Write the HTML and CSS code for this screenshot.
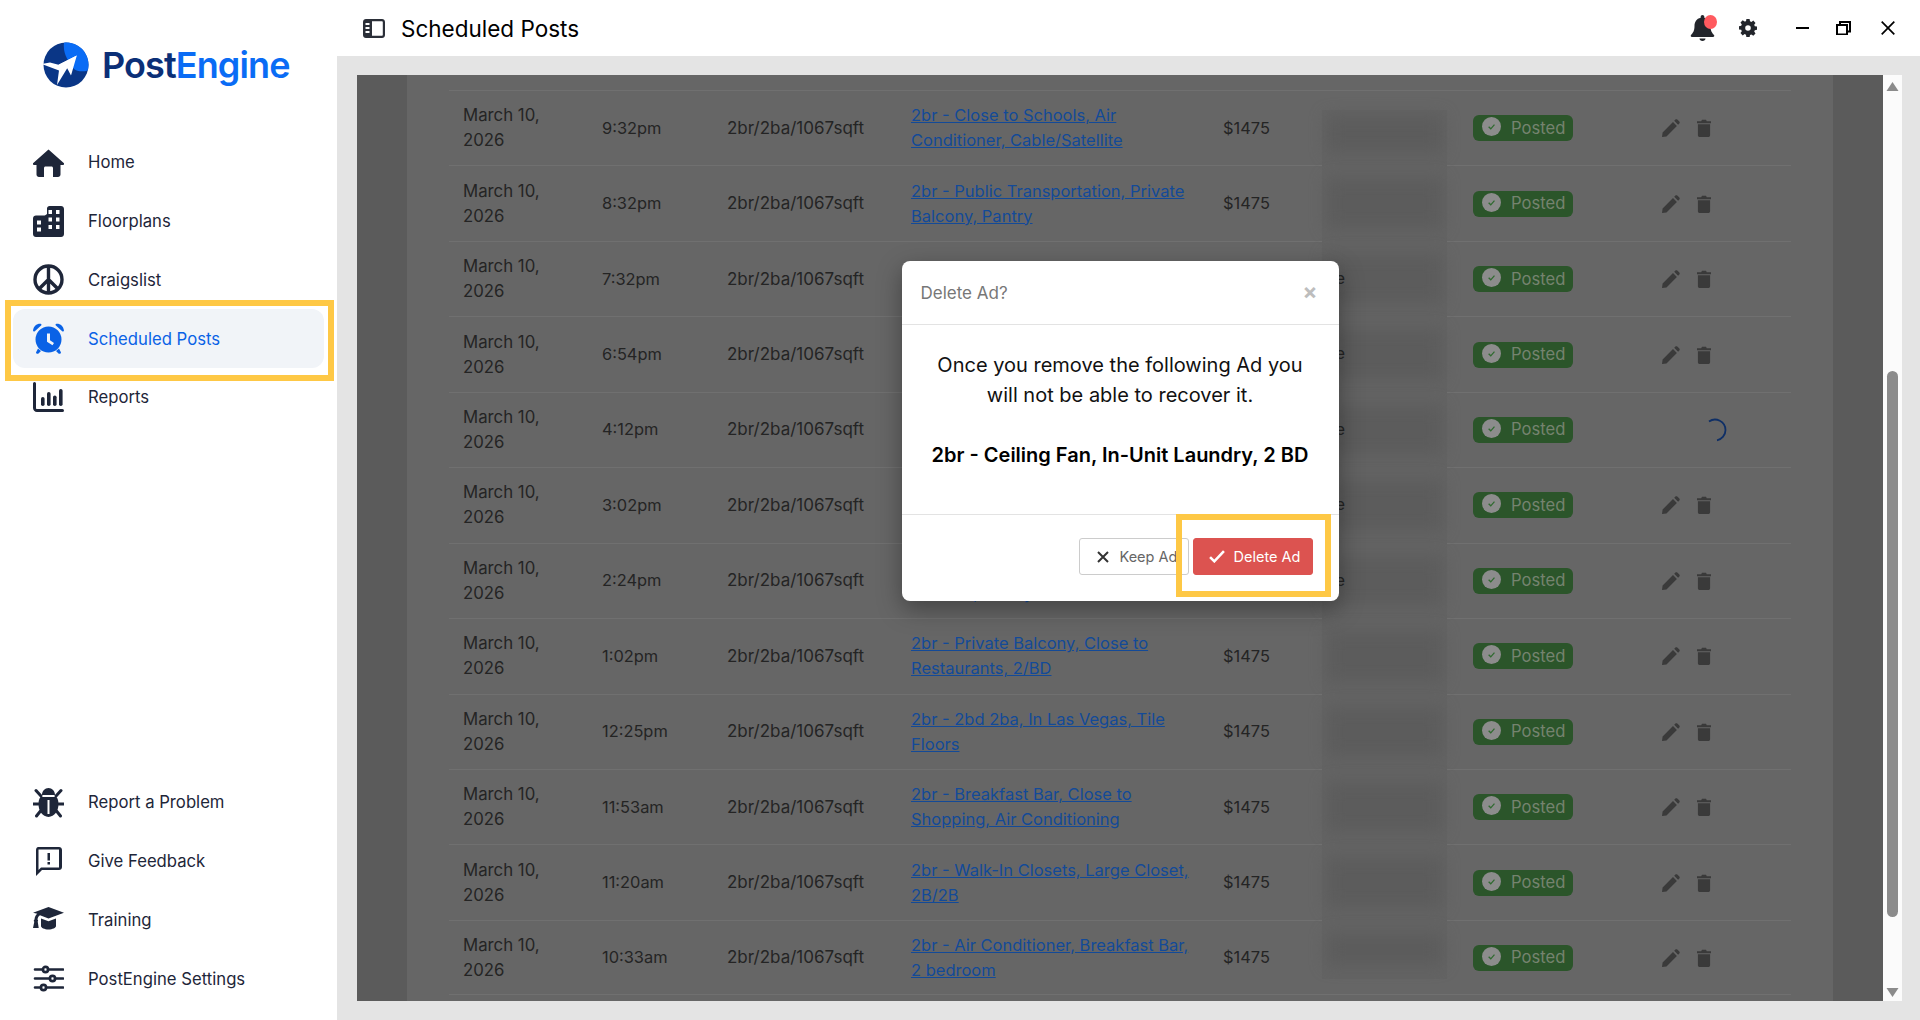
FILE: index.html
```html
<!DOCTYPE html>
<html lang="en">
<head>
<meta charset="utf-8">
<title>Scheduled Posts - PostEngine</title>
<link rel="stylesheet" href="styles.css">
</head>
<body>
<svg class="sprites" aria-hidden="true">
  <symbol id="pencil" viewBox="0 0 18 18"><path d="M0 18l.6-4.6L11 3l3.9 4L4.5 17.400zM12.200 1.800l1.200-1.200c.6-.6 1.300-.6 1.900 0l2 2c.6.6.6 1.300 0 1.900l-1.200 1.200z"/></symbol>
  <symbol id="trash" viewBox="0 0 14 18"><path d="M0 2.300h4.200L5 .8h4l.8 1.500H14v1.900H0zM.9 5.200h12.200v11c0 1-.8 1.800-1.800 1.800H2.700c-1 0-1.800-.8-1.800-1.800z"/></symbol>
  <symbol id="tick" viewBox="0 0 18 18"><circle cx="9" cy="9" r="9" fill="#8c8c8c"/><path d="M6.300 9.200l2 2 3.500-4" fill="none" stroke="#2f6a2f" stroke-width="1.200"/></symbol>
</svg>
<div class="app">
  <aside class="sidebar">
    <div class="sidebar-top">
      <div class="logo">
        <svg class="logo-mark" viewBox="0 0 46 46">
          <circle cx="23" cy="23" r="22.500" fill="#0a3686"/>
          <path d="M21 .8C32 -1 45.500 8 45.500 23c0 3-.6 4.600-1 5.500-4 1.500-11 1-13.500-1.500C26 21 19.500 12 21 .8z" fill="#0a6cf5"/>
          <path d="M33.800 13.500L28 33.500l-3.800-7.300L14 43l2-14.500L-1 22l8-1.500 8.500 2.300z" fill="#fff"/>
          <path d="M15.500 22.800L33.800 13.500 24.200 26.200z" fill="#fff"/>
        </svg>
        <span class="logo-text"><span class="logo-post">Post</span><span class="logo-engine">Engine</span></span>
      </div>
      <nav class="nav">
        <a class="nav-item">
          <svg class="nav-icon" viewBox="0 0 31 31"><path d="M15.500 2.500L31 16.300c.5.8 0 1.700-.9 1.700h-2.600v9.500c0 1.400-1.100 2.500-2.500 2.500h-5V21c0-.8-.7-1.500-1.500-1.500h-6c-.8 0-1.500.7-1.500 1.500v9H6c-1.400 0-2.500-1.100-2.500-2.500V18H.9c-.9 0-1.400-.9-.9-1.700z"/></svg>
          Home
        </a>
        <a class="nav-item">
          <svg class="nav-icon" viewBox="0 0 31 31"><path fill-rule="evenodd" d="M14 2.500C14 1.100 15.100 0 16.500 0H28c1.700 0 3 1.300 3 3v25c0 1.700-1.300 3-3 3H3c-1.700 0-3-1.300-3-3V12.500c0-1.700 1.300-3 3-3h8c.8 0 1.500-.2 3-1.500zM15.500 4v4h3.500V4zM23 4v4h3.500V4zM15.500 11.500v4h3.500v-4zM23 11.500v4h3.500v-4zM15.500 19v4h3.500v-4zM23 19v4h3.500v-4zM4 14.500v4h4v-4zM4 21.500v4h4v-4z"/></svg>
          Floorplans
        </a>
        <a class="nav-item">
          <svg class="nav-icon peace" viewBox="0 0 31 31"><circle cx="15.500" cy="15.500" r="13.500"/><path d="M15.500 2v27M15.500 15.500L6 25M15.500 15.500L25 25"/></svg>
          Craigslist
        </a>
        <a class="nav-item active">
          <svg class="nav-icon" viewBox="0 0 31 31"><path fill-rule="evenodd" d="M15.500 3.500a13 13 0 1 1 0 26 13 13 0 0 1 0-26zM14 10.500v8.300l5.500 3.500 1.500-2.300-4-2.700v-6.800z"/><path d="M0 7.500C.8 3 3.500.6 7.500.8c1 .1 1.300 1 .6 1.700L1.800 8.200C1 8.800.1 8.500 0 7.500zM31 7.500C30.200 3 27.500.6 23.500.8c-1 .1-1.300 1-.6 1.700l6.300 5.700c.8.600 1.700.3 1.800-.7zM5 25.500l3 2.500-2.500 2.400c-.6.6-1.400.6-2 0s-.6-1.400 0-2zM26 25.500l-3 2.500 2.500 2.400c.6.6 1.400.6 2 0s.6-1.400 0-2z"/></svg>
          Scheduled Posts
          <span class="highlight highlight-nav"></span>
        </a>
        <a class="nav-item">
          <svg class="nav-icon" viewBox="0 0 31 31"><path d="M0 1.500a1.500 1.500 0 0 1 3 0V26c0 .6.400 1 1 1h25.500a1.500 1.500 0 0 1 0 3H4c-2.200 0-4-1.800-4-4z"/><rect x="8" y="15" width="3.600" height="9" rx="1.800"/><rect x="14" y="10" width="3.600" height="14" rx="1.800"/><rect x="20" y="13.500" width="3.600" height="10.500" rx="1.800"/><rect x="26" y="7" width="3.600" height="17" rx="1.800"/></svg>
          Reports
        </a>
      </nav>
    </div>
    <nav class="nav">
      <a class="nav-item">
        <svg class="nav-icon" viewBox="0 0 31 31"><path fill-rule="evenodd" d="M9 8c0-4 3-7 6.500-7S22 4 22 8zM7.500 10h16c1.500 2 2 4 2 7 0 7-4 12.500-10 13-6-.5-10-6-10-13 0-3 .5-5 2-7zM14.500 13v14h2V13z"/><path d="M3 3.500L8 9M28 3.500L23 9M0.500 17h5M25.500 17h5M3.500 29l4-5M27.500 29l-4-5" fill="none" stroke="currentColor" stroke-width="3" stroke-linecap="round"/></svg>
        Report a Problem
      </a>
      <a class="nav-item">
        <svg class="nav-icon" viewBox="0 0 31 31"><path fill-rule="evenodd" d="M5 1h21c1.700 0 3 1.300 3 3v17c0 1.700-1.300 3-3 3H9l-5.500 5.500-.5.500V4c0-1.700 1.300-3 2-3zM5.500 3.500V24L8 21.500h18V3.500z"/><rect x="14.500" y="7" width="2.500" height="7.500"/><rect x="14.500" y="16" width="2.500" height="2.500"/></svg>
        Give Feedback
      </a>
      <a class="nav-item">
        <svg class="nav-icon" viewBox="0 0 31 31"><path d="M15.500 3L31 8.700 15.500 14.500 7 11.300c-1.500 1-2.300 2.400-2.500 4.200.7.500.8 1.400.2 2l1 6.500H0l1.300-6.300c-.8-.7-.6-1.800.2-2.300.2-2.400 1.100-4.300 2.800-5.600L0 8.700z"/><path d="M8 14.500l7.500 2.800 7.500-2.800V22c0 1.800-3.500 3.500-7.500 3.500S8 23.800 8 22z"/></svg>
        Training
      </a>
      <a class="nav-item">
        <svg class="nav-icon sliders" viewBox="0 0 31 31"><path d="M2 6.500h8M15 6.500h15M2 15.500h15M22 15.500h8M2 24.500h6M13 24.500h17"/><circle cx="12.500" cy="6.500" r="2.600"/><circle cx="19.500" cy="15.500" r="2.600"/><circle cx="10.500" cy="24.500" r="2.600"/></svg>
        PostEngine Settings
      </a>
    </nav>
  </aside>

  <div class="content">
    <header class="topbar">
      <svg class="panel-toggle" viewBox="0 0 22 19"><path fill-rule="evenodd" d="M3 0h16c1.700 0 3 1.300 3 3v13c0 1.700-1.300 3-3 3H3c-1.700 0-3-1.300-3-3V3c0-1.700 1.300-3 3-3zM9 2.200v14.600h10c.4 0 .8-.4.800-.8V3c0-.4-.4-.8-.8-.8zM2.500 4v2h4V4zM2.500 8v2h4V8zM2.500 12v2h4v-2z"/></svg>
      <h1 class="page-title">Scheduled Posts</h1>
      <div class="bell">
        <svg class="bell-icon" viewBox="0 0 25 26"><path d="M12.500 0c1 0 1.800.8 1.800 1.800v.9c4.200.8 6.200 4.300 6.200 8.300 0 5 1.700 7 3.500 9 .7.800.2 2-1 2H2c-1.200 0-1.700-1.200-1-2 1.800-2 3.500-4 3.500-9 0-4 2-7.500 6.200-8.300v-.9c0-1 .8-1.800 1.800-1.800zM9.500 23.500h6c0 1.500-1.300 2.500-3 2.500s-3-1-3-2.500z"/></svg>
        <span class="bell-dot"></span>
      </div>
      <svg class="gear" viewBox="0 0 18 18"><path fill-rule="evenodd" d="M7.400 0h3.200l.4 2.300 1.400.6 1.900-1.300 2.200 2.300-1.300 1.900.6 1.400 2.200.4v3.200l-2.200.4-.6 1.400 1.300 1.900-2.200 2.300-1.900-1.300-1.400.6-.4 2.300H7.400L7 15.700l-1.400-.6-1.900 1.300-2.200-2.300 1.300-1.900-.6-1.400L0 10.400V7.200l2.200-.4.6-1.400L1.500 3.500l2.200-2.300 1.900 1.300L7 2.300zM9 6.200a2.800 2.800 0 1 0 0 5.600 2.800 2.800 0 0 0 0-5.600z"/></svg>
      <div class="window-controls">
        <svg class="win win-min" viewBox="0 0 14 14"><path d="M0 7h13"/></svg>
        <svg class="win win-restore" viewBox="0 0 15 14"><path d="M1 4h10v9.500H1zM4 4V1h10v9.500h-3"/></svg>
        <svg class="win win-close" viewBox="0 0 14 14"><path d="M.7.7l12.600 12.600M13.300.7L.7 13.300"/></svg>
      </div>
    </header>

    <main class="main">
      <section class="panel">
        <div class="gutter"></div>
        <div class="table-wrap">
          <div class="table">
            <div class="row">
              <div class="date">March 10, 2026</div><div>9:32pm</div><div class="size">2br/2ba/1067sqft</div>
              <a class="title">2br - Close to Schools, Air Conditioner, Cable/Satellite</a><div>$1475</div>
              <div class="blur"><i></i></div>
              <div><span class="badge"><svg class="badge-tick"><use href="#tick"/></svg>Posted</span></div>
              <div class="actions"><svg class="act-pencil"><use href="#pencil"/></svg><svg class="act-trash"><use href="#trash"/></svg></div>
            </div>
            <div class="row">
              <div class="date">March 10, 2026</div><div>8:32pm</div><div class="size">2br/2ba/1067sqft</div>
              <a class="title">2br - Public Transportation, Private Balcony, Pantry</a><div>$1475</div>
              <div class="blur"><i></i></div>
              <div><span class="badge"><svg class="badge-tick"><use href="#tick"/></svg>Posted</span></div>
              <div class="actions"><svg class="act-pencil"><use href="#pencil"/></svg><svg class="act-trash"><use href="#trash"/></svg></div>
            </div>
            <div class="row">
              <div class="date">March 10, 2026</div><div>7:32pm</div><div class="size">2br/2ba/1067sqft</div>
              <a class="title">2br - Dishwasher, Garage</a><div>$1475</div>
              <div class="blur"><i></i><span class="peek">Active</span></div>
              <div><span class="badge"><svg class="badge-tick"><use href="#tick"/></svg>Posted</span></div>
              <div class="actions"><svg class="act-pencil"><use href="#pencil"/></svg><svg class="act-trash"><use href="#trash"/></svg></div>
            </div>
            <div class="row">
              <div class="date">March 10, 2026</div><div>6:54pm</div><div class="size">2br/2ba/1067sqft</div>
              <a class="title">2br - Tile Floors, Breakfast Bar, 2/BD</a><div>$1475</div>
              <div class="blur"><i></i><span class="peek">Active</span></div>
              <div><span class="badge"><svg class="badge-tick"><use href="#tick"/></svg>Posted</span></div>
              <div class="actions"><svg class="act-pencil"><use href="#pencil"/></svg><svg class="act-trash"><use href="#trash"/></svg></div>
            </div>
            <div class="row">
              <div class="date">March 10, 2026</div><div>4:12pm</div><div class="size">2br/2ba/1067sqft</div>
              <a class="title">2br - Ceiling Fan, In-Unit Laundry, 2 BD</a><div>$1475</div>
              <div class="blur"><i></i><span class="peek">Active</span></div>
              <div><span class="badge"><svg class="badge-tick"><use href="#tick"/></svg>Posted</span></div>
              <div class="actions actions-busy"><svg class="spinner" viewBox="0 0 24 24"><path d="M6 3.500A10.500 10.500 0 0 1 22.500 12 10.500 10.500 0 0 1 14 22.300"/></svg></div>
            </div>
            <div class="row">
              <div class="date">March 10, 2026</div><div>3:02pm</div><div class="size">2br/2ba/1067sqft</div>
              <a class="title">2br - Large Closet, Air Conditioning, 2B/2B</a><div>$1475</div>
              <div class="blur"><i></i><span class="peek">Active</span></div>
              <div><span class="badge"><svg class="badge-tick"><use href="#tick"/></svg>Posted</span></div>
              <div class="actions"><svg class="act-pencil"><use href="#pencil"/></svg><svg class="act-trash"><use href="#trash"/></svg></div>
            </div>
            <div class="row">
              <div class="date">March 10, 2026</div><div>2:24pm</div><div class="size">2br/2ba/1067sqft</div>
              <a class="title">2br - Walk-In Closets, Close to Schools, Pantry</a><div>$1475</div>
              <div class="blur"><i></i><span class="peek">Active</span></div>
              <div><span class="badge"><svg class="badge-tick"><use href="#tick"/></svg>Posted</span></div>
              <div class="actions"><svg class="act-pencil"><use href="#pencil"/></svg><svg class="act-trash"><use href="#trash"/></svg></div>
            </div>
            <div class="row">
              <div class="date">March 10, 2026</div><div>1:02pm</div><div class="size">2br/2ba/1067sqft</div>
              <a class="title">2br - Private Balcony, Close to Restaurants, 2/BD</a><div>$1475</div>
              <div class="blur"><i></i></div>
              <div><span class="badge"><svg class="badge-tick"><use href="#tick"/></svg>Posted</span></div>
              <div class="actions"><svg class="act-pencil"><use href="#pencil"/></svg><svg class="act-trash"><use href="#trash"/></svg></div>
            </div>
            <div class="row">
              <div class="date">March 10, 2026</div><div>12:25pm</div><div class="size">2br/2ba/1067sqft</div>
              <a class="title">2br - 2bd 2ba, In Las Vegas, Tile Floors</a><div>$1475</div>
              <div class="blur"><i></i></div>
              <div><span class="badge"><svg class="badge-tick"><use href="#tick"/></svg>Posted</span></div>
              <div class="actions"><svg class="act-pencil"><use href="#pencil"/></svg><svg class="act-trash"><use href="#trash"/></svg></div>
            </div>
            <div class="row">
              <div class="date">March 10, 2026</div><div>11:53am</div><div class="size">2br/2ba/1067sqft</div>
              <a class="title">2br - Breakfast Bar, Close to Shopping, Air Conditioning</a><div>$1475</div>
              <div class="blur"><i></i></div>
              <div><span class="badge"><svg class="badge-tick"><use href="#tick"/></svg>Posted</span></div>
              <div class="actions"><svg class="act-pencil"><use href="#pencil"/></svg><svg class="act-trash"><use href="#trash"/></svg></div>
            </div>
            <div class="row">
              <div class="date">March 10, 2026</div><div>11:20am</div><div class="size">2br/2ba/1067sqft</div>
              <a class="title">2br - Walk-In Closets, Large Closet, 2B/2B</a><div>$1475</div>
              <div class="blur"><i></i></div>
              <div><span class="badge"><svg class="badge-tick"><use href="#tick"/></svg>Posted</span></div>
              <div class="actions"><svg class="act-pencil"><use href="#pencil"/></svg><svg class="act-trash"><use href="#trash"/></svg></div>
            </div>
            <div class="row">
              <div class="date">March 10, 2026</div><div>10:33am</div><div class="size">2br/2ba/1067sqft</div>
              <a class="title">2br - Air Conditioner, Breakfast Bar, 2 bedroom</a><div>$1475</div>
              <div class="blur"><i></i></div>
              <div><span class="badge"><svg class="badge-tick"><use href="#tick"/></svg>Posted</span></div>
              <div class="actions"><svg class="act-pencil"><use href="#pencil"/></svg><svg class="act-trash"><use href="#trash"/></svg></div>
            </div>
          </div>
        </div>
        <div class="gutter"></div>
        <div class="scrollbar">
          <svg class="arrow" viewBox="0 0 12 9"><path d="M6 0l6 9H0z"/></svg>
          <div class="thumb"></div>
          <svg class="arrow arrow-down" viewBox="0 0 12 9"><path d="M0 0h12L6 9z"/></svg>
        </div>

        <div class="modal-layer">
          <div class="modal">
            <div class="modal-head">
              <span>Delete Ad?</span>
              <span class="modal-close">×</span>
            </div>
            <div class="modal-body">
              <p>Once you remove the following Ad you will not be able to recover it.</p>
              <p class="ad-name">2br - Ceiling Fan, In-Unit Laundry, 2 BD</p>
            </div>
            <div class="modal-foot">
              <button class="btn btn-keep">
                <svg class="btn-icon" viewBox="0 0 12 12"><path d="M1 1l10 10M11 1L1 11"/></svg>
                Keep Ad
              </button>
              <button class="btn btn-delete">
                <svg class="btn-icon" viewBox="0 0 15 12"><path d="M1 6.500l4 4L14 1"/></svg>
                Delete Ad
              </button>
              <span class="highlight highlight-btn"></span>
            </div>
          </div>
        </div>
      </section>
    </main>
  </div>
</div>
</body>
</html>
```

FILE: styles.css
```css
* { box-sizing: border-box; }
html, body { height: 100%; }
body {
  margin: 0;
  font-family: Inter, "Noto Sans", sans-serif;
  color: #1e2639;
  background: #fff;
  overflow: hidden;
}
.sprites { position: absolute; width: 0; height: 0; }
.app { display: flex; height: 1020px; }

/* Sidebar */
.sidebar {
  width: 337px;
  flex: none;
  display: flex;
  flex-direction: column;
  justify-content: space-between;
  background: #fff;
  padding-bottom: 12px;
}
.logo {
  display: flex;
  align-items: center;
  gap: 13px;
  height: 133px;
  padding: 0 0 4px 43px;
}
.logo-mark { width: 46px; height: 46px; flex: none; }
.logo-text {
  font-size: 36px;
  font-weight: 600;
  letter-spacing: -.9px;
  line-height: 1;
}
.logo-post { color: #0b2f77; }
.logo-engine { color: #0a6cf5; }

.nav { display: flex; flex-direction: column; }
.nav-item {
  position: relative;
  display: flex;
  align-items: center;
  gap: 24px;
  height: 58.75px;
  margin: 0 13px;
  padding-left: 20px;
  font-size: 16.7px;
  border-radius: 12px;
  color: #1e2639;
}
.nav-item.active { background: #f1f4f8; color: #0a62e6; }
.nav-icon { width: 31px; height: 31px; flex: none; fill: currentColor; }
.peace { fill: none; stroke: currentColor; stroke-width: 3.4; }
.sliders { fill: none; stroke: currentColor; stroke-width: 2.6; stroke-linecap: round; }

.highlight {
  position: absolute;
  border: 6px solid #fec845;
  pointer-events: none;
}
.highlight-nav { left: -8px; right: -10px; top: -9px; bottom: -13px; }

/* Top bar */
.content { flex: 1; min-width: 0; display: flex; flex-direction: column; }
.topbar {
  height: 56px;
  flex: none;
  display: flex;
  align-items: center;
  background: #fff;
  padding-left: 26px;
}
.panel-toggle { width: 22px; height: 19px; fill: #2b2f38; flex: none; }
.page-title {
  margin: 0 0 0 16px;
  font-size: 22.5px;
  font-weight: 400;
  color: #000;
  flex: 1;
}
.bell { position: relative; width: 25px; height: 26px; flex: none; }
.bell-icon { display: block; width: 25px; height: 26px; fill: #22252b; }
.bell-dot {
  position: absolute;
  right: -2px;
  top: 0;
  width: 13px;
  height: 14px;
  border-radius: 50%;
  background: #ff5a5f;
}
.gear { width: 18px; height: 18px; margin-left: 24px; fill: #22252b; flex: none; }
.window-controls { display: flex; align-items: center; gap: 26px; margin-left: 39px; padding-right: 25px; }
.win { fill: none; stroke: #000; stroke-width: 2; display: block; }
.win-min { width: 14px; height: 14px; }
.win-restore { width: 15px; height: 14px; }
.win-close { width: 14px; height: 14px; stroke-width: 1.7; margin-left: 4px; }

/* Main panel */
.main { flex: 1; min-height: 0; background: #e4e4e4; padding: 19px 18px 19px 20px; }
.panel { position: relative; display: flex; height: 926px; overflow: hidden; background: #5b5b5b; }
.gutter { width: 50px; flex: none; background: #5b5b5b; }
.table-wrap { flex: 1; min-width: 0; background: #666; padding: 15px 42px 0; overflow: hidden; }
.row {
  display: grid;
  grid-template-columns: 139px 125px 184px 312px 99px 151px 189px 1fr;
  align-items: center;
  height: 75.45px;
  padding-left: 14px;
  border-top: 1px solid #707070;
  font-size: 16.4px;
  line-height: 25px;
  color: #242424;
}
.row:last-child { border-bottom: 1px solid #707070; }
.date { padding-right: 40px; font-size: 16.8px; }
.size { font-size: 17px; }
.title { color: #134a98; text-decoration: underline; padding-right: 27px; font-size: 16.5px; }
.blur { position: relative; align-self: stretch; margin: -1px 26px -1px 0; background: #636363; overflow: visible; }
.blur i {
  position: absolute;
  left: 5px;
  right: 5px;
  top: 14px;
  bottom: 14px;
  background: #5c5c5c;
  filter: blur(8px);
}
.row:first-child .blur { margin-top: 19px; }
.row:first-child .blur i { top: 6px; }
.row:last-child .blur { margin-bottom: 15px; }
.peek { position: absolute; right: calc(100% - 23px); top: 25px; white-space: nowrap; }
.badge {
  display: flex;
  align-items: center;
  gap: 10px;
  width: 100px;
  height: 26px;
  padding-left: 9px;
  border-radius: 6px;
  background: #2b552a;
  color: #75836f;
  font-size: 16.6px;
}
.badge-tick { width: 19px; height: 19px; flex: none; margin-top: -3px; }
.actions { display: flex; align-items: center; gap: 17px; fill: #3a3a3a; }
.act-pencil { width: 18px; height: 18px; }
.act-trash { width: 14px; height: 18px; }
.actions-busy { padding-left: 41px; }
.spinner { width: 24px; height: 24px; fill: none; stroke: #0f2f66; stroke-width: 1.8; }

/* Scrollbar */
.scrollbar {
  width: 19px;
  flex: none;
  display: flex;
  flex-direction: column;
  align-items: center;
  background: #fbfbfb;
  padding: 7px 0 4px;
}
.arrow { width: 13px; height: 9px; fill: #8b8b8b; flex: none; }
.arrow-down { margin-top: auto; }
.thumb { width: 11px; height: 546px; margin-top: 280px; background: #8b8b8b; border-radius: 6px; }

/* Modal */
.modal-layer {
  position: absolute;
  inset: 0 19px 0 0;
  display: flex;
  justify-content: center;
  align-items: flex-start;
  padding-top: 186px;
}
.modal {
  width: 437px;
  height: 340px;
  display: flex;
  flex-direction: column;
  background: #fff;
  border-radius: 8px;
  box-shadow: 0 8px 24px rgba(0, 0, 0, .35);
}
.modal-head {
  height: 64px;
  flex: none;
  display: flex;
  align-items: center;
  justify-content: space-between;
  padding: 0 21px 0 19px;
  border-bottom: 1px solid #e3e3e3;
  font-size: 17px;
  color: #777;
}
.modal-close { font-size: 22px; font-weight: 700; color: #bdbdbd; line-height: 1; margin-top: -3px; }
.modal-body {
  flex: 1;
  padding: 25px 20px 0;
  text-align: center;
  font-size: 20px;
  line-height: 30px;
  color: #111;
}
.modal-body p { margin: 0; }
.modal-body .ad-name { margin-top: 30px; font-weight: 600; color: #000; }
.modal-foot {
  position: relative;
  height: 87px;
  flex: none;
  display: flex;
  justify-content: flex-end;
  align-items: flex-start;
  gap: 4px;
  padding: 23px 26px 0 0;
  border-top: 1px solid #e3e3e3;
}
.btn {
  display: flex;
  align-items: center;
  height: 37px;
  font: inherit;
  font-size: 14.5px;
  border-radius: 3px;
  padding: 0;
}
.btn-icon { fill: none; stroke-width: 2; flex: none; }
.btn-keep { width: 110px; padding-left: 17px; gap: 11px; background: #fff; border: 1px solid #ccc; color: #666; }
.btn-keep .btn-icon { width: 12px; height: 12px; stroke: #333; }
.btn-delete { width: 120px; padding-left: 15px; gap: 9px; background: #dc5350; border: 1px solid #dc5350; color: #fff; }
.btn-delete .btn-icon { width: 16px; height: 13px; stroke: #fff; stroke-width: 2.4; }
.highlight-btn { left: 274px; right: 8px; top: -1px; bottom: 4px; }
```
